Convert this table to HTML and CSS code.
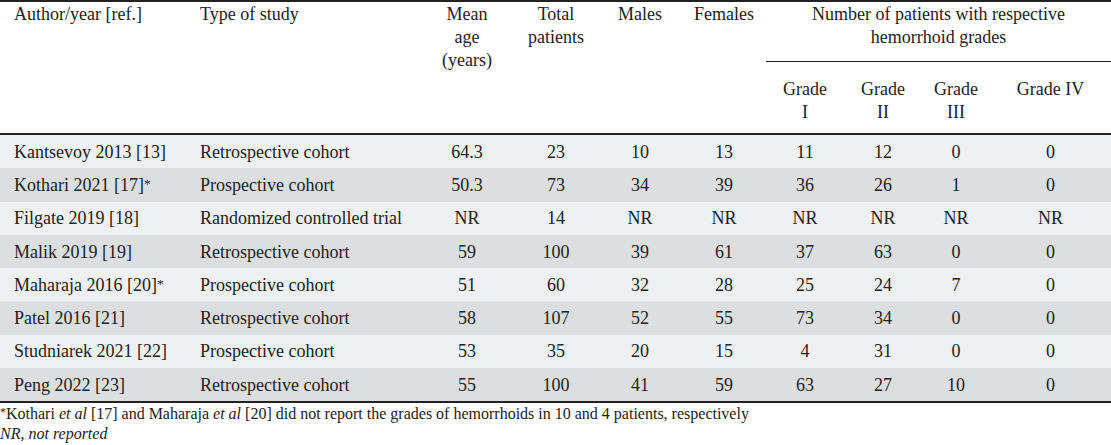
FILE: index.html
```html
<!DOCTYPE html>
<html lang="en">
<head>
<meta charset="utf-8">
<title>Hemorrhoid studies</title>
<link rel="stylesheet" href="styles.css">
</head>
<body>
<table class="tbl">
  <colgroup>
    <col class="c1"><col class="c2"><col class="c3"><col class="c4"><col class="c5">
    <col class="c6"><col class="c7"><col class="c8"><col class="c9"><col class="c10">
  </colgroup>
  <thead>
    <tr class="hr1">
      <th rowspan="2" class="left">Author/year [ref.]</th>
      <th rowspan="2" class="left">Type of study</th>
      <th rowspan="2">Mean<br>age<br>(years)</th>
      <th rowspan="2">Total<br>patients</th>
      <th rowspan="2">Males</th>
      <th rowspan="2">Females</th>
      <th colspan="4" class="group">Number of patients with respective<br>hemorrhoid grades</th>
    </tr>
    <tr class="hr2">
      <th>Grade<br>I</th>
      <th>Grade<br>II</th>
      <th>Grade<br>III</th>
      <th>Grade IV</th>
    </tr>
  </thead>
  <tbody>
    <tr class="odd"><td class="left">Kantsevoy 2013 [13]</td><td class="left">Retrospective cohort</td><td>64.3</td><td>23</td><td>10</td><td>13</td><td>11</td><td>12</td><td>0</td><td>0</td></tr>
    <tr class="even"><td class="left">Kothari 2021 [17]<span class="ast">*</span></td><td class="left">Prospective cohort</td><td>50.3</td><td>73</td><td>34</td><td>39</td><td>36</td><td>26</td><td>1</td><td>0</td></tr>
    <tr class="odd"><td class="left">Filgate 2019 [18]</td><td class="left">Randomized controlled trial</td><td>NR</td><td>14</td><td>NR</td><td>NR</td><td>NR</td><td>NR</td><td>NR</td><td>NR</td></tr>
    <tr class="even"><td class="left">Malik 2019 [19]</td><td class="left">Retrospective cohort</td><td>59</td><td>100</td><td>39</td><td>61</td><td>37</td><td>63</td><td>0</td><td>0</td></tr>
    <tr class="odd"><td class="left">Maharaja 2016 [20]<span class="ast">*</span></td><td class="left">Prospective cohort</td><td>51</td><td>60</td><td>32</td><td>28</td><td>25</td><td>24</td><td>7</td><td>0</td></tr>
    <tr class="even"><td class="left">Patel 2016 [21]</td><td class="left">Retrospective cohort</td><td>58</td><td>107</td><td>52</td><td>55</td><td>73</td><td>34</td><td>0</td><td>0</td></tr>
    <tr class="odd"><td class="left">Studniarek 2021 [22]</td><td class="left">Prospective cohort</td><td>53</td><td>35</td><td>20</td><td>15</td><td>4</td><td>31</td><td>0</td><td>0</td></tr>
    <tr class="even"><td class="left">Peng 2022 [23]</td><td class="left">Retrospective cohort</td><td>55</td><td>100</td><td>41</td><td>59</td><td>63</td><td>27</td><td>10</td><td>0</td></tr>
  </tbody>
</table>
<div class="notes">
  <p><span class="ast">*</span>Kothari <i>et al</i> [17] and Maharaja <i>et al</i> [20] did not report the grades of hemorrhoids in 10 and 4 patients, respectively</p>
  <p><i>NR, not reported</i></p>
</div>
</body>
</html>
```

FILE: styles.css
```css
html, body {
  margin: 0;
  padding: 0;
  background: #ffffff;
}
body {
  font-family: "Liberation Serif", "DejaVu Serif", serif;
  color: #222222;
  width: 1111px;
}
.tbl {
  width: 1111px;
  border-collapse: collapse;
  table-layout: fixed;
  font-size: 18px;
  border-top: 2px solid #222222;
  border-bottom: 2px solid #222222;
}
.c1 { width: 186px; }
.c2 { width: 234px; }
.c3 { width: 94px; }
.c4 { width: 84px; }
.c5 { width: 84px; }
.c6 { width: 84px; }
.c7 { width: 78px; }
.c8 { width: 78px; }
.c9 { width: 68px; }
.c10 { width: 121px; }

th {
  font-weight: normal;
  text-align: center;
  vertical-align: top;
  line-height: 23px;
  padding: 0;
}
thead {
  border-bottom: 2px solid #222222;
}
.hr1 th {
  padding-top: 1px;
  height: 58px;
}
.hr1 th.group {
  border-bottom: 1px solid #222222;
}
.hr2 th {
  padding-top: 16px;
  height: 55px;
}
th.left {
  text-align: left;
  padding-left: 14px;
}
td {
  text-align: center;
  height: 33.3px;
  padding: 0;
  line-height: 20px;
  vertical-align: middle;
  white-space: nowrap;
}
td.left {
  text-align: left;
  padding-left: 14px;
}
.odd td { background: #eef0f1; }
.even td { background: #dcdee0; }
.ast {
  font-size: 0.75em;
  vertical-align: 0.25em;
  line-height: 0;
}
.notes {
  font-size: 16px;
  line-height: 20px;
  padding-top: 1px;
}
.notes p {
  margin: 0;
}
```
